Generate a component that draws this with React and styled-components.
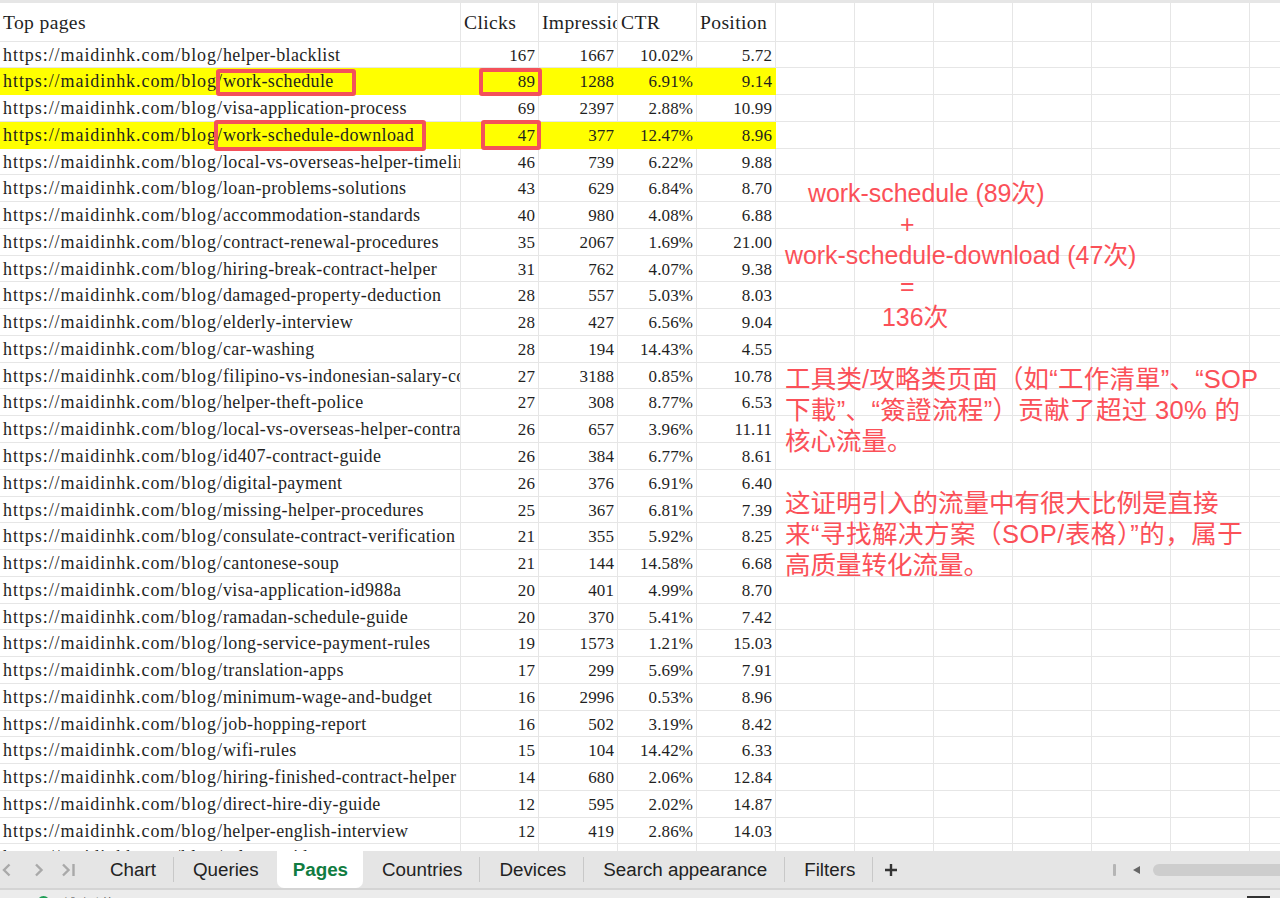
import React from 'react';
import styled, {createGlobalStyle} from 'styled-components';

const rows = [
	['helper-blacklist', 167, 1667, '10.02%', '5.72'],
	['work-schedule', 89, 1288, '6.91%', '9.14', true],
	['visa-application-process', 69, 2397, '2.88%', '10.99'],
	['work-schedule-download', 47, 377, '12.47%', '8.96', true],
	['local-vs-overseas-helper-timeline', 46, 739, '6.22%', '9.88'],
	['loan-problems-solutions', 43, 629, '6.84%', '8.70'],
	['accommodation-standards', 40, 980, '4.08%', '6.88'],
	['contract-renewal-procedures', 35, 2067, '1.69%', '21.00'],
	['hiring-break-contract-helper', 31, 762, '4.07%', '9.38'],
	['damaged-property-deduction', 28, 557, '5.03%', '8.03'],
	['elderly-interview', 28, 427, '6.56%', '9.04'],
	['car-washing', 28, 194, '14.43%', '4.55'],
	['filipino-vs-indonesian-salary-comparison', 27, 3188, '0.85%', '10.78'],
	['helper-theft-police', 27, 308, '8.77%', '6.53'],
	['local-vs-overseas-helper-contract', 26, 657, '3.96%', '11.11'],
	['id407-contract-guide', 26, 384, '6.77%', '8.61'],
	['digital-payment', 26, 376, '6.91%', '6.40'],
	['missing-helper-procedures', 25, 367, '6.81%', '7.39'],
	['consulate-contract-verification', 21, 355, '5.92%', '8.25'],
	['cantonese-soup', 21, 144, '14.58%', '6.68'],
	['visa-application-id988a', 20, 401, '4.99%', '8.70'],
	['ramadan-schedule-guide', 20, 370, '5.41%', '7.42'],
	['long-service-payment-rules', 19, 1573, '1.21%', '15.03'],
	['translation-apps', 17, 299, '5.69%', '7.91'],
	['minimum-wage-and-budget', 16, 2996, '0.53%', '8.96'],
	['job-hopping-report', 16, 502, '3.19%', '8.42'],
	['wifi-rules', 15, 104, '14.42%', '6.33'],
	['hiring-finished-contract-helper', 14, 680, '2.06%', '12.84'],
	['direct-hire-diy-guide', 12, 595, '2.02%', '14.87'],
	['helper-english-interview', 12, 419, '2.86%', '14.03'],
	['salary-guide', 11, 254, '4.26%', '5.48'],
];

const tabs = ['Chart', 'Queries', 'Pages', 'Countries', 'Devices', 'Search appearance', 'Filters'];
const emptyCols = 7;

export default function App(){
	return(
		<Page>
			<GlobalStyle/>
			<Sheet>
				<Row $header>
					<Cell $header>Top pages</Cell>
					<Cell $header>Clicks</Cell>
					<Cell $header>Impressions</Cell>
					<Cell $header>CTR</Cell>
					<Cell $header>Position</Cell>
					{[...Array(emptyCols)].map((_, i) => <Cell key={i}/>)}
				</Row>
				{rows.map((r, i) =>
					<Row key={i}>
						<Cell $url $mark={r[5]}><UrlBase>https://maidinhk.com/blog/</UrlBase>{r[0]}</Cell>
						<Cell $num $mark={r[5]}>{r[1]}</Cell>
						<Cell $num $mark={r[5]}>{r[2]}</Cell>
						<Cell $num $mark={r[5]}>{r[3]}</Cell>
						<Cell $num $mark={r[5]}>{r[4]}</Cell>
						{[...Array(emptyCols)].map((_, k) => <Cell key={k}/>)}
					</Row>
				)}
				<RedBox $x={216} $y={69} $w={140} $h={27}/>
				<RedBox $x={479} $y={68} $w={63} $h={28}/>
				<RedBox $x={214} $y={120} $w={212} $h={31}/>
				<RedBox $x={481} $y={120} $w={60} $h={30}/>
				<Note $x={785} $y={178} $w={370} $size={24.9}>
					<NoteLine $indent={23}>work-schedule (89次)</NoteLine>
					<NoteLine $indent={115}>+</NoteLine>
					<NoteLine>work-schedule-download (47次)</NoteLine>
					<NoteLine $indent={115}>=</NoteLine>
					<NoteLine $indent={97}>136次</NoteLine>
				</Note>
				<Note $x={785} $y={364} $w={480} $size={25.5}>
					<NoteLine $track={0.2}>工具类/攻略类页面（如“工作清單”、“SOP</NoteLine>
					<NoteLine $track={0.35}>下載”、“簽證流程”）贡献了超过 30% 的</NoteLine>
					<NoteLine>核心流量。</NoteLine>
					<NoteLine>&nbsp;</NoteLine>
					<NoteLine>这证明引入的流量中有很大比例是直接</NoteLine>
					<NoteLine $track={0.5}>来“寻找解决方案（SOP/表格）”的，属于</NoteLine>
					<NoteLine>高质量转化流量。</NoteLine>
				</Note>
			</Sheet>
			<TabBar>
				<Arrow>
					<svg width="76" height="16" viewBox="0 0 76 16" fill="none" strokeWidth="2.4" stroke="#a9a9a9">
						<path d="M9.5 2.5 L4 8 L9.5 13.5"/>
						<path d="M36 2.5 L41.5 8 L36 13.5"/>
						<path d="M63 2.5 L68.5 8 L63 13.5"/>
						<path d="M73.5 2 L73.5 14"/>
					</svg>
				</Arrow>
				{tabs.map(t => <Tab key={t} $active={t === 'Pages'} $beforeActive={t === 'Queries'}>{t}</Tab>)}
				<Plus>
					<svg width="14" height="14" viewBox="0 0 14 14"><path d="M7 1 V13 M1 7 H13" stroke="#333" strokeWidth="2.4"/></svg>
				</Plus>
				<Spacer/>
				<ScrollTick/>
				<ScrollLeft/>
				<ScrollThumb/>
			</TabBar>
			<StatusBar>
				<StatusDot/>
				<StatusText>辅助功能</StatusText>
				<Spacer/>
				<ViewIcon/>
			</StatusBar>
		</Page>
	)
}

const GlobalStyle = createGlobalStyle`
	html, body{
		margin: 0;
		padding: 0;
		background: #fff;
	}
`

const Page = styled.div`
	width: 1280px;
	height: 898px;
	overflow: hidden;
	display: flex;
	flex-direction: column;
	font-family: "Liberation Sans", "Noto Sans CJK SC", sans-serif;
`

const Sheet = styled.div`
	height: 851px;
	box-sizing: border-box;
	overflow: hidden;
	position: relative;
	flex: none;
	border-top: 3px solid #e6e6e6;
`

const Row = styled.div`
	display: grid;
	grid-template-columns: 461px 78px 79px 79px 79px repeat(7, 79px);
	height: ${({$header}) => $header ? '38.5px' : '26.77px'};
	box-sizing: border-box;
	font-family: "Liberation Serif", serif;
	color: #1f1f1f;
`

const Cell = styled.div`
	border-right: 1.5px solid ${({$mark}) => $mark ? '#ffff00' : '#e6e6e6'};
	border-bottom: 1.5px solid ${({$mark}) => $mark ? '#ffff00' : '#e6e6e6'};
	background: ${({$mark}) => $mark ? '#ffff00' : 'transparent'};
	padding: 0 3px;
	text-align: ${({$num}) => $num ? 'right' : 'left'};
	white-space: nowrap;
	overflow: hidden;
	font-size: ${({$header, $url}) => $header ? '19.6px' : $url ? '18px' : '17px'};
	letter-spacing: ${({$header, $url}) => $header ? '0.35px' : $url ? '0.37px' : '0.1px'};
	line-height: ${({$header}) => $header ? '40px' : '27px'};
`

const UrlBase = styled.span`
	letter-spacing: 0.94px;
`

const RedBox = styled.div`
	position: absolute;
	left: ${({$x}) => $x}px;
	top: ${({$y}) => $y - 3}px;
	width: ${({$w}) => $w}px;
	height: ${({$h}) => $h}px;
	box-sizing: border-box;
	border: 4px solid #f4515a;
	border-radius: 3px;
`

const Note = styled.div`
	position: absolute;
	left: ${({$x}) => $x}px;
	top: ${({$y}) => $y - 3}px;
	width: ${({$w}) => $w}px;
	color: #fb5058;
	font-size: ${({$size}) => $size}px;
	line-height: 31px;
`

const NoteLine = styled.div`
	padding-left: ${({$indent}) => $indent || 0}px;
	letter-spacing: ${({$track}) => $track || 0}px;
	white-space: nowrap;
`

const TabBar = styled.div`
	height: 37px;
	flex: none;
	background: #e5e5e5;
	border-bottom: 2px solid #d4d4d4;
	display: flex;
	align-items: center;
`

const Arrow = styled.div`
	width: 91px;
	box-sizing: border-box;
	display: flex;
	flex: none;
`

const Tab = styled.div`
	height: 100%;
	flex: none;
	display: flex;
	align-items: center;
	box-sizing: border-box;
	position: relative;
	padding: ${({$active}) => $active ? '0 15px 0 16px' : '0 18px 0 19px'};
	font-size: 18.8px;
	color: ${({$active}) => $active ? '#107c41' : '#222'};
	font-weight: ${({$active}) => $active ? 700 : 400};
	background: ${({$active}) => $active ? '#fff' : 'transparent'};
	border-radius: ${({$active}) => $active ? '0 0 7px 7px' : '0'};
	&::after{
		content: '';
		position: absolute;
		right: 0;
		top: 6px;
		bottom: 6px;
		width: 1px;
		background: ${({$active, $beforeActive}) => ($active || $beforeActive) ? 'transparent' : '#c8c8c8'};
	}
`

const Plus = styled.div`
	margin-left: 11px;
	display: flex;
`

const Spacer = styled.div`
	flex: 1;
`

const ScrollTick = styled.div`
	width: 3px;
	height: 12px;
	border-radius: 1px;
	background: #b5b5b5;
`

const ScrollLeft = styled.div`
	width: 0;
	height: 0;
	margin: 0 13px 0 17px;
	border-top: 4px solid transparent;
	border-bottom: 4px solid transparent;
	border-right: 7px solid #666;
`

const ScrollThumb = styled.div`
	width: 127px;
	height: 12px;
	background: #cdcdcd;
	border-radius: 6px 0 0 6px;
`

const StatusBar = styled.div`
	flex: 1;
	background: #ececec;
	display: flex;
	align-items: flex-start;
	padding-left: 37px;
	gap: 13px;
`

const StatusDot = styled.div`
	width: 13px;
	height: 13px;
	border-radius: 50%;
	background: #1f9d55;
	margin-top: 6px;
	flex: none;
`

const StatusText = styled.div`
	font-size: 13px;
	line-height: 16px;
	margin-top: 6px;
	color: #555;
`

const ViewIcon = styled.div`
	width: 23px;
	height: 12px;
	margin: 6px 10px 0 0;
	background: #333;
`
